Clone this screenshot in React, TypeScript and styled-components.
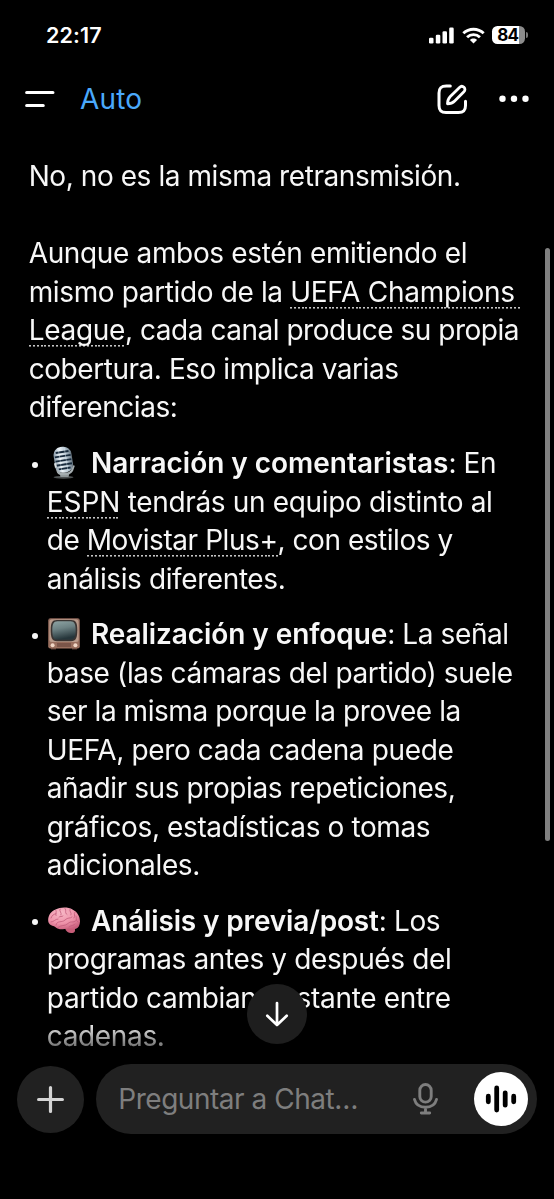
import React from "react";
import styled, { createGlobalStyle } from "styled-components";

const GlobalStyle = createGlobalStyle`
  * { box-sizing: border-box; }
  body { margin: 0; background: #000; overflow: hidden; }
`;

const Screen = styled.div`
  position: relative;
  display: flex;
  flex-direction: column;
  width: 554px;
  height: 1199px;
  overflow: hidden;
  background: #000;
  color: #f7f7f7;
  font-family: Inter, "Liberation Sans", sans-serif;
  font-size: 28px;
`;

const StatusBar = styled.div`
  display: flex;
  align-items: center;
  justify-content: space-between;
  height: 70px;
  padding: 0 26px 0 46px;
`;

const Clock = styled.span`
  font-size: 21.5px;
  font-weight: 600;
  letter-spacing: 0.1px;
  color: #fff;
`;

const StatusIcons = styled.div`
  display: flex;
  align-items: center;
  gap: 7.500px;
`;

const Battery = styled.div`
  display: flex;
  align-items: center;
  gap: 1.5px;
`;

const BatteryBody = styled.div`
  display: flex;
  align-items: center;
  justify-content: center;
  width: 32.5px;
  height: 18px;
  padding-right: 1px;
  border-radius: 5.5px;
  background: linear-gradient(to right, #fff 27px, #8c8c8c 27px);
  color: #000;
  font-size: 17px;
  font-weight: 700;
  letter-spacing: -0.7px;
`;

const BatteryNub = styled.div`
  width: 2px;
  height: 6px;
  border-radius: 0 3px 3px 0;
  background: #777;
`;

const Header = styled.header`
  display: flex;
  align-items: center;
  height: 57px;
  padding: 0 24px;
`;

const ModelName = styled.span`
  flex: 1;
  margin-left: 25px;
  letter-spacing: 0.15px;
  color: #4aa9fc;
`;

const HeaderActions = styled.div`
  display: flex;
  align-items: center;
  gap: 30.5px;
`;

const Messages = styled.main`
  flex: 1;
  padding: 30px 0 0 28.7px;
  line-height: 38.5px;
  mask-image: linear-gradient(to bottom, #000 895px, rgba(0, 0, 0, 0.35) 925px, transparent 933px);
`;

const Paragraph = styled.p<{ $gap: number }>`
  margin: 0 0 ${(p) => p.$gap}px;
`;

const List = styled.ul`
  display: flex;
  flex-direction: column;
  gap: 17px;
  margin: 0;
  padding: 0;
  list-style: none;
`;

const Item = styled.li`
  display: flex;
`;

const Bullet = styled.span`
  flex: none;
  width: 6px;
  height: 6px;
  margin: 17.5px 8.3px 0 3.8px;
  border-radius: 50%;
  background: #f7f7f7;
`;

const Line = styled.span<{ $track?: number }>`
  display: block;
  height: 38.5px;
  white-space: pre;
  letter-spacing: ${(p) => p.$track ?? -0.3}px;
`;

const LeadLine = styled(Line)`
  display: flex;
`;

const Strong = styled.strong<{ $track: number }>`
  font-weight: 600;
  letter-spacing: ${(p) => p.$track}px;
`;

const Span = styled.span<{ $track: number }>`
  letter-spacing: ${(p) => p.$track}px;
`;

const Entity = styled.span<{ $track?: number; $trail?: number }>`
  padding: 0 ${(p) => p.$trail ?? 0}px 0 0;
  letter-spacing: ${(p) => p.$track ?? -0.3}px;
  background: repeating-linear-gradient(to right, #c4c4c4 0 2px, transparent 2px 3.86px) left bottom / 100% 1.6px no-repeat;
`;

const EmojiIcon = styled.svg`
  flex: none;
  width: 34px;
  height: 34px;
  margin: 2px 9.5px 0 0.7px;
`;

const ScrollThumb = styled.div`
  position: absolute;
  top: 248px;
  right: 4px;
  width: 5px;
  height: 593px;
  border-radius: 3px;
  background: #808080;
`;

const ScrollDown = styled.button`
  position: absolute;
  top: 984px;
  left: 247px;
  display: grid;
  place-items: center;
  width: 60px;
  height: 60px;
  padding: 0;
  border: 0;
  border-radius: 50%;
  background: #1e1e1e;
`;

const Composer = styled.footer`
  display: flex;
  align-items: center;
  gap: 11.5px;
  height: 135px;
  padding: 0 17px 65.5px;
`;

const AddButton = styled.button`
  display: grid;
  flex: none;
  place-items: center;
  width: 67px;
  height: 67px;
  margin-top: 2px;
  padding: 0;
  border: 0;
  border-radius: 50%;
  background: #212121;
`;

const InputPill = styled.div`
  display: flex;
  flex: 1;
  align-items: center;
  height: 69.5px;
  padding: 0 9px 0 22.8px;
  border-radius: 35px;
  background: #212121;
`;

const Placeholder = styled.span`
  flex: 1;
  color: #7e7e7e;
  letter-spacing: -0.47px;
  white-space: nowrap;
`;

const VoiceButton = styled.button`
  display: grid;
  place-items: center;
  width: 54px;
  height: 54px;
  margin-left: 35.5px;
  padding: 0;
  border: 0;
  border-radius: 50%;
  background: #fff;
`;

const Microphone = () => (
  <EmojiIcon viewBox="0 0 34 34" role="img" aria-label="micrófono">
    <defs>
      <linearGradient id="micBody" x1="0" x2="1">
        <stop offset="0" stopColor="#8799a8" />
        <stop offset=".35" stopColor="#eef5fa" />
        <stop offset=".7" stopColor="#b3c3cf" />
        <stop offset="1" stopColor="#63717c" />
      </linearGradient>
    </defs>
    <ellipse cx="16.5" cy="31.3" rx="10" ry="1.5" fill="#4d5152" />
    <path d="M12.5 27h10l-1 4h-8z" fill="#8f9799" />
    <path d="M8 17.5l3 8.5c2.5 3.5 12 2.5 14-1.5l1.8-5" fill="none" stroke="#a5adb0" strokeWidth="2.2" />
    <g transform="rotate(-9 16 15)">
      <rect x="7.5" y=".8" width="18" height="26" rx="8" fill="url(#micBody)" />
      <path d="M10 6h13M8.5 10.2h16M8.5 14.4h16M8.5 18.6h16M10.5 22.6h12" stroke="#172a3c" strokeWidth="1.9" />
      <path d="M13.2 2.5v23M19.3 2.5v23" stroke="#dce8f0" strokeWidth=".7" opacity=".6" />
      <path d="M8 15.8v4.5" stroke="#d9e0e4" strokeWidth="2" />
    </g>
  </EmojiIcon>
);

const Television = () => (
  <EmojiIcon viewBox="0 0 34 34" role="img" aria-label="televisión">
    <defs>
      <linearGradient id="tvGlass" x1="0" y1="0" x2=".25" y2="1">
        <stop offset="0" stopColor="#8ea4a4" />
        <stop offset=".45" stopColor="#6d8284" />
        <stop offset="1" stopColor="#26363b" />
      </linearGradient>
      <linearGradient id="tvCase" x1="0" y1="0" x2="0" y2="1">
        <stop offset="0" stopColor="#8d6558" />
        <stop offset="1" stopColor="#9b705f" />
      </linearGradient>
    </defs>
    <path d="M4 30h5v2.500H4zM25 30h5v2.500h-5z" fill="#563a32" />
    <rect x="1.200" y="1.200" width="31.600" height="30.300" rx="2.200" fill="url(#tvCase)" />
    <rect x="2.400" y="2.300" width="29.200" height="22.800" rx="2.500" fill="#b99b8b" />
    <path d="M10 2.900h14c5 0 6.300 3 6.300 10.300s-1.300 11-6.300 11H10c-5 0-6.300-3.700-6.300-11S5 2.900 10 2.900z" fill="#3a3432" />
    <path d="M10.500 4.200h13c4 0 5.200 2.800 5.200 9s-1.200 9.500-5.200 9.500h-13c-4 0-5.200-3.300-5.200-9.500s1.200-9 5.200-9z" fill="url(#tvGlass)" />
    <path d="M10 27h14M10 29h14" stroke="#5c3d34" strokeWidth="1" />
    <circle cx="5.600" cy="28.200" r="2" fill="#f0d6c6" />
    <circle cx="28.400" cy="28.200" r="2" fill="#f0d6c6" />
  </EmojiIcon>
);

const Brain = () => (
  <EmojiIcon viewBox="0 0 34 34" role="img" aria-label="cerebro">
    <defs>
      <radialGradient id="brainFill" cx=".4" cy=".25" r=".8">
        <stop offset="0" stopColor="#f7b8c6" />
        <stop offset=".6" stopColor="#ee92a9" />
        <stop offset="1" stopColor="#c95f7d" />
      </radialGradient>
    </defs>
    <path d="M18 24c1 4 4.500 6 8.500 4.700 1.800-.7 2-3 .8-5z" fill="#c75d78" />
    <path d="M1.200 17C.8 11.500 4 7.300 8.500 5.500 13 3 21 2.700 25.500 5.500c4.500 2 7.700 7 7.500 12-.1 3.500-1.500 6.500-4 7.200-3 1-5-.4-8-.3-3.500.2-6 1.300-9 .5-2-.4-3-1.500-4.500-2.500-3-.6-6-2.200-6.300-5.400z" fill="url(#brainFill)" />
    <path d="M4 14c1-3 3-4 5-4.200M9 6.500c1 2-1 3 0 5M13 5c-1 3 2 3 1 6M18 4.500c2 2-1 4 2 6M23 5.500c-1 2 2 3 1 5.500M28 8c-2 2 1 4-1 6M4 18c3 0 4-3 7-3M9 21c1-5 6-2 9-5s5-1 7-3M11 23.500c3-3 7-1 10-4s5 0 8-3M29 12c1 2-1 4 2 6M22 23c2-2 5-1 6-3M16 12c-1 1-3 0-4 1" fill="none" stroke="#c25c7b" strokeWidth=".8" strokeLinecap="round" />
  </EmojiIcon>
);

export default function App() {
  return (
    <>
      <GlobalStyle />
      <Screen>
        <StatusBar>
          <Clock>22:17</Clock>
          <StatusIcons>
            <svg width="25" height="17" viewBox="0 0 25 17" fill="#fff">
              <rect x="0" y="10.800" width="4.500" height="5.700" rx="1.300" />
              <rect x="6.800" y="7.700" width="4.500" height="8.800" rx="1.300" />
              <rect x="13.500" y="4.300" width="4.500" height="12.200" rx="1.300" />
              <rect x="20.200" y=".4" width="4.500" height="16.100" rx="1.300" />
            </svg>
            <svg width="23" height="17" viewBox="0 0 24 17" fill="none" stroke="#fff" strokeWidth="3">
              <path d="M1.400 6.200C7.300.5 16.700.5 22.600 6.200" />
              <path d="M5.300 10.300c3.800-3.700 9.600-3.700 13.400 0" />
              <path d="M8.300 13.200c2.200-2 5.200-2 7.400 0L12 16.900z" fill="#fff" stroke="none" />
            </svg>
            <Battery>
              <BatteryBody>84</BatteryBody>
              <BatteryNub />
            </Battery>
          </StatusIcons>
        </StatusBar>

        <Header>
          <svg width="31" height="18" viewBox="0 0 31 18" stroke="#fff" strokeWidth="3.200" strokeLinecap="round">
            <path d="M2.700 2.500h26.200M2.700 15.500h16.500" />
          </svg>
          <ModelName>Auto</ModelName>
          <HeaderActions>
            <svg width="32" height="32" viewBox="0 0 32 32" fill="none" stroke="#fff" strokeWidth="3" strokeLinecap="round" strokeLinejoin="round">
              <path d="M14.300 3h-4C5 3 3 5 3 10v12.500c0 5 2 7 7 7h12.500c5 0 7-2 7-7v-4.300" />
              <path d="M11.500 20.800c0-3.200.8-5.200 2.800-7.200l9.200-9.200c1.400-1.400 3.300-1.300 4.500-.1s1.300 3.200-.1 4.500l-9.200 9.200c-2 2-4 2.800-7.200 2.800z" strokeWidth="2.800" />
            </svg>
            <svg width="32" height="8" viewBox="0 0 32 8" fill="#fff">
              <circle cx="4.500" cy="3.700" r="3.200" />
              <circle cx="16" cy="3.700" r="3.200" />
              <circle cx="27.500" cy="3.700" r="3.200" />
            </svg>
          </HeaderActions>
        </Header>

        <Messages>
          <Paragraph $gap={38.5}>
            <Line $track={-0.43}>No, no es la misma retransmisión.</Line>
          </Paragraph>
          <Paragraph $gap={17.5}>
            <Line $track={-0.35}>Aunque ambos estén emitiendo el</Line>
            <Line $track={-0.37}>mismo partido de la <Entity $track={-0.25} $trail={5.5}>UEFA Champions</Entity></Line>
            <Line $track={-0.48}><Entity>League</Entity>, cada canal produce su propia</Line>
            <Line $track={-0.45}>cobertura. Eso implica varias</Line>
            <Line $track={-0.45}>diferencias:</Line>
          </Paragraph>
          <List>
            <Item>
              <Bullet />
              <div>
                <LeadLine><Microphone /><Strong $track={-0.02}>Narración y comentaristas</Strong><Span $track={-0.4}>: En</Span></LeadLine>
                <Line $track={-0.34}><Entity $track={-0.1}>ESPN</Entity> tendrás un equipo distinto al</Line>
                <Line $track={-0.46}>de <Entity $track={-0.43}>Movistar Plus+</Entity>, con estilos y</Line>
                <Line $track={-0.4}>análisis diferentes.</Line>
              </div>
            </Item>
            <Item>
              <Bullet />
              <div>
                <LeadLine><Television /><Strong $track={-0.08}>Realización y enfoque</Strong><Span $track={-0.4}>: La señal</Span></LeadLine>
                <Line $track={-0.37}>base (las cámaras del partido) suele</Line>
                <Line $track={-0.44}>ser la misma porque la provee la</Line>
                <Line $track={-0.37}>UEFA, pero cada cadena puede</Line>
                <Line $track={-0.41}>añadir sus propias repeticiones,</Line>
                <Line $track={-0.38}>gráficos, estadísticas o tomas</Line>
                <Line $track={-0.35}>adicionales.</Line>
              </div>
            </Item>
            <Item>
              <Bullet />
              <div>
                <LeadLine><Brain /><Strong $track={-0.15}>Análisis y previa/post</Strong><Span $track={-0.4}>: Los</Span></LeadLine>
                <Line $track={-0.37}>programas antes y después del</Line>
                <Line $track={-0.32}>partido cambian bastante entre</Line>
                <Line $track={-0.35}>cadenas.</Line>
              </div>
            </Item>
          </List>
        </Messages>

        <Composer>
          <AddButton aria-label="Añadir">
            <svg width="29" height="29" viewBox="0 0 29 29" stroke="#d4d4d4" strokeWidth="3.200" strokeLinecap="round">
              <path d="M14.500 2.600v23.800M2.600 14.500h23.800" />
            </svg>
          </AddButton>
          <InputPill>
            <Placeholder>Preguntar a Chat…</Placeholder>
            <svg width="27" height="33" viewBox="0 0 27 33" fill="none" stroke="#7e7e7e" strokeWidth="2.900" strokeLinecap="round">
              <rect x="7.800" y="2.500" width="11.400" height="17.600" rx="5.700" />
              <path d="M2.500 17.500c1.200 4.700 5.300 7.800 11 7.800s9.800-3.100 11-7.800M13.500 25.800V30.500M9.300 31h8.400" />
            </svg>
            <VoiceButton aria-label="Voz">
              <svg width="32" height="30" viewBox="0 0 32 30" stroke="#000" strokeWidth="4.800" strokeLinecap="round">
                <path d="M3.300 12.200v5.600M11.700 4v22M20.200 8.800v12.400M28.700 12.200v5.600" />
              </svg>
            </VoiceButton>
          </InputPill>
        </Composer>

        <ScrollThumb />
        <ScrollDown aria-label="Bajar">
          <svg width="26" height="28" viewBox="0 0 26 28" fill="none" stroke="#fff" strokeWidth="2.700" strokeLinecap="round" strokeLinejoin="round">
            <path d="M13 3v22M3.300 15.800L13 25l9.700-9.200" />
          </svg>
        </ScrollDown>
      </Screen>
    </>
  );
}
